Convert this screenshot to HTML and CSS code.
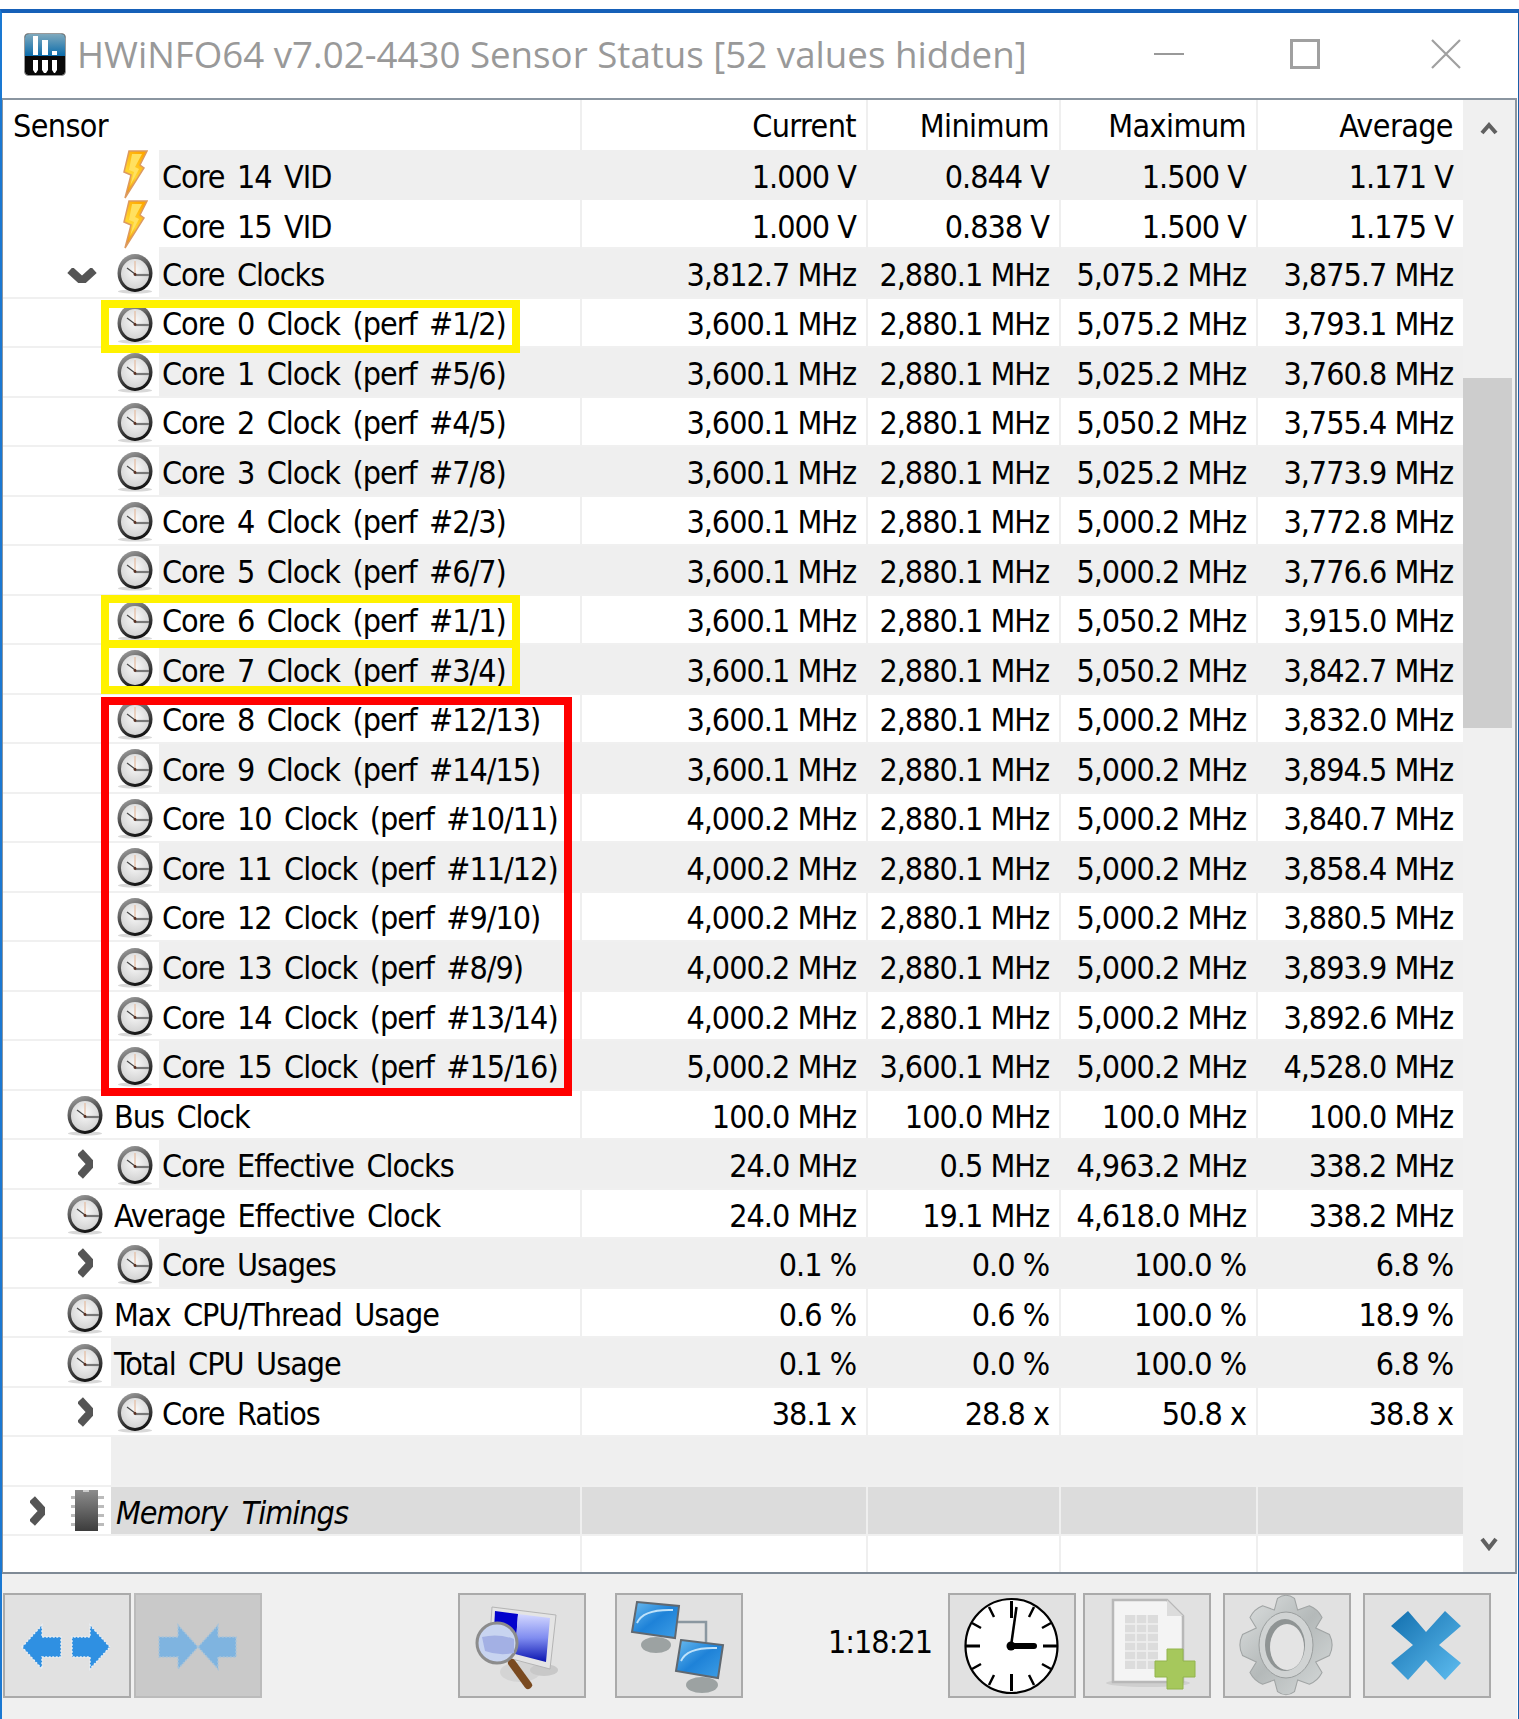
FILE: index.html
```html
<!DOCTYPE html>
<html lang="en">
<head>
<meta charset="utf-8">
<title>HWiNFO64 Sensor Status</title>
<link rel="stylesheet" href="styles.css">
</head>
<body>
<svg class="defs" aria-hidden="true">
  <defs>
    <linearGradient id="ring" x1="0.2" y1="0" x2="0.6" y2="1"><stop offset="0" stop-color="#a0a0a0"/><stop offset="0.5" stop-color="#4c4c4c"/><stop offset="1" stop-color="#101010"/></linearGradient>
    <radialGradient id="face" cx="0.5" cy="0.4" r="0.7"><stop offset="0" stop-color="#fafafa"/><stop offset="1" stop-color="#cccccc"/></radialGradient>
    <linearGradient id="boltg" x1="0.7" y1="0" x2="0.3" y2="1"><stop offset="0" stop-color="#ffa800"/><stop offset="0.55" stop-color="#ffd530"/><stop offset="1" stop-color="#f59000"/></linearGradient>
    <linearGradient id="chipg" x1="0" y1="0" x2="0" y2="1"><stop offset="0" stop-color="#8c8c8c"/><stop offset="1" stop-color="#3c3c3c"/></linearGradient>
    <linearGradient id="logog" x1="0" y1="0" x2="0" y2="1"><stop offset="0" stop-color="#7fa9bd"/><stop offset="1" stop-color="#0a6cab"/></linearGradient>
    <linearGradient id="panel" x1="0" y1="0" x2="0" y2="1"><stop offset="0" stop-color="#d4d8ff"/><stop offset="0.5" stop-color="#7f8cf0"/><stop offset="1" stop-color="#0a14b0"/></linearGradient>
    <linearGradient id="scrn2" x1="0" y1="0" x2="1" y2="1"><stop offset="0" stop-color="#6cbcf0"/><stop offset="0.5" stop-color="#1e82d8"/><stop offset="1" stop-color="#3f9fe6"/></linearGradient>
    <linearGradient id="silver" x1="0" y1="0" x2="1" y2="1"><stop offset="0" stop-color="#dfe2e2"/><stop offset="0.5" stop-color="#b4b9b9"/><stop offset="1" stop-color="#d8dcdc"/></linearGradient>
    <linearGradient id="xg" x1="0" y1="0" x2="1" y2="1"><stop offset="0" stop-color="#126fae"/><stop offset="1" stop-color="#5fbdf0"/></linearGradient>
    <filter id="soft"><feGaussianBlur stdDeviation="0.7"/></filter>
    <symbol id="clock" viewBox="0 0 36 40">
      <ellipse cx="18" cy="37.5" rx="17" ry="2" fill="#d8d8d8"/>
      <ellipse cx="18" cy="19" rx="17.5" ry="19" fill="url(#ring)"/>
      <ellipse cx="18" cy="20" rx="14" ry="15" fill="url(#face)"/>
      <path d="M18 20V7" stroke="#e6c4ae" stroke-width="1.5"/>
      <path d="M18 20L10 14" stroke="#444" stroke-width="1.2"/>
      <path d="M18 21H32" stroke="#777" stroke-width="2.2"/>
      <circle cx="18" cy="20.5" r="1.4" fill="#5a3020"/>
    </symbol>
    <symbol id="bolt" viewBox="0 0 26 50">
      <path d="M7 1H25L18 15L22 18L3 48L9 25L2 22Z" fill="url(#boltg)" stroke="#dc9a60" stroke-width="1.5"/>
      <path d="M10 4H20L13 17L17 19L8 36L12 22L7 20Z" fill="#ffe060"/>
    </symbol>
    <symbol id="chev-r" viewBox="0 0 19 30">
      <path d="M4 3L15 15L4 27" fill="none" stroke="#555" stroke-width="8" filter="url(#soft)"/>
    </symbol>
    <symbol id="chev-d" viewBox="0 0 30 20">
      <path d="M3 4L15 15L27 4" fill="none" stroke="#555" stroke-width="8" filter="url(#soft)"/>
    </symbol>
  </defs>
</svg>
<main class="window">
  <header class="titlebar">
    <svg class="logo" viewBox="0 0 42 43"><rect x="0.5" y="0.5" width="41" height="42" rx="4" fill="#0a0a0a" stroke="#999"/><path d="M1 5a4 4 0 0 1 4-4h32a4 4 0 0 1 4 4V23H1Z" fill="url(#logog)"/><g fill="#fff"><rect x="9" y="3" width="5" height="19"/><rect x="18" y="7" width="6" height="15"/><rect x="28" y="18" width="5" height="4"/><path d="M9 27h5v10l-2 3h-1l-2-3Z"/><path d="M18 27h6v10l-2 3h-2l-2-3Z"/><path d="M28 27h5v10l-2 3h-1l-2-3Z"/></g></svg>
    <h1 class="title">HWiNFO64 v7.02-4430 Sensor Status [52 values hidden]</h1>
    <span class="winbtn winbtn-min"></span>
    <span class="winbtn winbtn-max"></span>
    <svg class="winbtn-close" viewBox="0 0 30 30"><path d="M1 1L29 29M29 1L1 29" stroke="#a0a0a0" stroke-width="2.2"/></svg>
  </header>
  <section class="frame">
    <div class="list">
      <div class="row head"><div class="name">Sensor</div><div class="val">Current</div><div class="val">Minimum</div><div class="val">Maximum</div><div class="val">Average</div></div>

      <div class="row alt"><div class="name"><span class="gutter l2"><svg class="ic-bolt"><use href="#bolt"/></svg></span><span class="label">Core 14 VID</span></div><div class="val">1.000 V</div><div class="val">0.844 V</div><div class="val">1.500 V</div><div class="val">1.171 V</div></div>
      <div class="row"><div class="name"><span class="gutter l2"><svg class="ic-bolt"><use href="#bolt"/></svg></span><span class="label">Core 15 VID</span></div><div class="val">1.000 V</div><div class="val">0.838 V</div><div class="val">1.500 V</div><div class="val">1.175 V</div></div>
      <div class="row alt"><div class="name"><span class="gutter l2"><svg class="ic-chev-d"><use href="#chev-d"/></svg><svg class="ic-clock"><use href="#clock"/></svg></span><span class="label">Core Clocks</span></div><div class="val">3,812.7 MHz</div><div class="val">2,880.1 MHz</div><div class="val">5,075.2 MHz</div><div class="val">3,875.7 MHz</div></div>
      <div class="row"><div class="name"><span class="gutter l2"><svg class="ic-clock"><use href="#clock"/></svg></span><span class="label">Core 0 Clock (perf #1/2)</span></div><div class="val">3,600.1 MHz</div><div class="val">2,880.1 MHz</div><div class="val">5,075.2 MHz</div><div class="val">3,793.1 MHz</div></div>
      <div class="row alt"><div class="name"><span class="gutter l2"><svg class="ic-clock"><use href="#clock"/></svg></span><span class="label">Core 1 Clock (perf #5/6)</span></div><div class="val">3,600.1 MHz</div><div class="val">2,880.1 MHz</div><div class="val">5,025.2 MHz</div><div class="val">3,760.8 MHz</div></div>
      <div class="row"><div class="name"><span class="gutter l2"><svg class="ic-clock"><use href="#clock"/></svg></span><span class="label">Core 2 Clock (perf #4/5)</span></div><div class="val">3,600.1 MHz</div><div class="val">2,880.1 MHz</div><div class="val">5,050.2 MHz</div><div class="val">3,755.4 MHz</div></div>
      <div class="row alt"><div class="name"><span class="gutter l2"><svg class="ic-clock"><use href="#clock"/></svg></span><span class="label">Core 3 Clock (perf #7/8)</span></div><div class="val">3,600.1 MHz</div><div class="val">2,880.1 MHz</div><div class="val">5,025.2 MHz</div><div class="val">3,773.9 MHz</div></div>
      <div class="row"><div class="name"><span class="gutter l2"><svg class="ic-clock"><use href="#clock"/></svg></span><span class="label">Core 4 Clock (perf #2/3)</span></div><div class="val">3,600.1 MHz</div><div class="val">2,880.1 MHz</div><div class="val">5,000.2 MHz</div><div class="val">3,772.8 MHz</div></div>
      <div class="row alt"><div class="name"><span class="gutter l2"><svg class="ic-clock"><use href="#clock"/></svg></span><span class="label">Core 5 Clock (perf #6/7)</span></div><div class="val">3,600.1 MHz</div><div class="val">2,880.1 MHz</div><div class="val">5,000.2 MHz</div><div class="val">3,776.6 MHz</div></div>
      <div class="row"><div class="name"><span class="gutter l2"><svg class="ic-clock"><use href="#clock"/></svg></span><span class="label">Core 6 Clock (perf #1/1)</span></div><div class="val">3,600.1 MHz</div><div class="val">2,880.1 MHz</div><div class="val">5,050.2 MHz</div><div class="val">3,915.0 MHz</div></div>
      <div class="row alt"><div class="name"><span class="gutter l2"><svg class="ic-clock"><use href="#clock"/></svg></span><span class="label">Core 7 Clock (perf #3/4)</span></div><div class="val">3,600.1 MHz</div><div class="val">2,880.1 MHz</div><div class="val">5,050.2 MHz</div><div class="val">3,842.7 MHz</div></div>
      <div class="row"><div class="name"><span class="gutter l2"><svg class="ic-clock"><use href="#clock"/></svg></span><span class="label">Core 8 Clock (perf #12/13)</span></div><div class="val">3,600.1 MHz</div><div class="val">2,880.1 MHz</div><div class="val">5,000.2 MHz</div><div class="val">3,832.0 MHz</div></div>
      <div class="row alt"><div class="name"><span class="gutter l2"><svg class="ic-clock"><use href="#clock"/></svg></span><span class="label">Core 9 Clock (perf #14/15)</span></div><div class="val">3,600.1 MHz</div><div class="val">2,880.1 MHz</div><div class="val">5,000.2 MHz</div><div class="val">3,894.5 MHz</div></div>
      <div class="row"><div class="name"><span class="gutter l2"><svg class="ic-clock"><use href="#clock"/></svg></span><span class="label">Core 10 Clock (perf #10/11)</span></div><div class="val">4,000.2 MHz</div><div class="val">2,880.1 MHz</div><div class="val">5,000.2 MHz</div><div class="val">3,840.7 MHz</div></div>
      <div class="row alt"><div class="name"><span class="gutter l2"><svg class="ic-clock"><use href="#clock"/></svg></span><span class="label">Core 11 Clock (perf #11/12)</span></div><div class="val">4,000.2 MHz</div><div class="val">2,880.1 MHz</div><div class="val">5,000.2 MHz</div><div class="val">3,858.4 MHz</div></div>
      <div class="row"><div class="name"><span class="gutter l2"><svg class="ic-clock"><use href="#clock"/></svg></span><span class="label">Core 12 Clock (perf #9/10)</span></div><div class="val">4,000.2 MHz</div><div class="val">2,880.1 MHz</div><div class="val">5,000.2 MHz</div><div class="val">3,880.5 MHz</div></div>
      <div class="row alt"><div class="name"><span class="gutter l2"><svg class="ic-clock"><use href="#clock"/></svg></span><span class="label">Core 13 Clock (perf #8/9)</span></div><div class="val">4,000.2 MHz</div><div class="val">2,880.1 MHz</div><div class="val">5,000.2 MHz</div><div class="val">3,893.9 MHz</div></div>
      <div class="row"><div class="name"><span class="gutter l2"><svg class="ic-clock"><use href="#clock"/></svg></span><span class="label">Core 14 Clock (perf #13/14)</span></div><div class="val">4,000.2 MHz</div><div class="val">2,880.1 MHz</div><div class="val">5,000.2 MHz</div><div class="val">3,892.6 MHz</div></div>
      <div class="row alt"><div class="name"><span class="gutter l2"><svg class="ic-clock"><use href="#clock"/></svg></span><span class="label">Core 15 Clock (perf #15/16)</span></div><div class="val">5,000.2 MHz</div><div class="val">3,600.1 MHz</div><div class="val">5,000.2 MHz</div><div class="val">4,528.0 MHz</div></div>
      <div class="row"><div class="name"><span class="gutter l1"><svg class="ic-clock1"><use href="#clock"/></svg></span><span class="label">Bus Clock</span></div><div class="val">100.0 MHz</div><div class="val">100.0 MHz</div><div class="val">100.0 MHz</div><div class="val">100.0 MHz</div></div>
      <div class="row alt"><div class="name"><span class="gutter l2"><svg class="ic-chev-r"><use href="#chev-r"/></svg><svg class="ic-clock"><use href="#clock"/></svg></span><span class="label">Core Effective Clocks</span></div><div class="val">24.0 MHz</div><div class="val">0.5 MHz</div><div class="val">4,963.2 MHz</div><div class="val">338.2 MHz</div></div>
      <div class="row"><div class="name"><span class="gutter l1"><svg class="ic-clock1"><use href="#clock"/></svg></span><span class="label">Average Effective Clock</span></div><div class="val">24.0 MHz</div><div class="val">19.1 MHz</div><div class="val">4,618.0 MHz</div><div class="val">338.2 MHz</div></div>
      <div class="row alt"><div class="name"><span class="gutter l2"><svg class="ic-chev-r"><use href="#chev-r"/></svg><svg class="ic-clock"><use href="#clock"/></svg></span><span class="label">Core Usages</span></div><div class="val">0.1 %</div><div class="val">0.0 %</div><div class="val">100.0 %</div><div class="val">6.8 %</div></div>
      <div class="row"><div class="name"><span class="gutter l1"><svg class="ic-clock1"><use href="#clock"/></svg></span><span class="label">Max CPU/Thread Usage</span></div><div class="val">0.6 %</div><div class="val">0.6 %</div><div class="val">100.0 %</div><div class="val">18.9 %</div></div>
      <div class="row alt"><div class="name"><span class="gutter l1"><svg class="ic-clock1"><use href="#clock"/></svg></span><span class="label">Total CPU Usage</span></div><div class="val">0.1 %</div><div class="val">0.0 %</div><div class="val">100.0 %</div><div class="val">6.8 %</div></div>
      <div class="row"><div class="name"><span class="gutter l2"><svg class="ic-chev-r"><use href="#chev-r"/></svg><svg class="ic-clock"><use href="#clock"/></svg></span><span class="label">Core Ratios</span></div><div class="val">38.1 x</div><div class="val">28.8 x</div><div class="val">50.8 x</div><div class="val">38.8 x</div></div>
      <div class="row alt"><div class="name"><span class="gutter l1"></span><span class="label"></span></div><div class="val"></div><div class="val"></div><div class="val"></div><div class="val"></div></div>
      <div class="row group"><div class="name"><span class="gutter l1"><svg class="ic-chev-r ic-chev-mem"><use href="#chev-r"/></svg><svg class="ic-chip" viewBox="0 0 33 41"><g fill="#bbb"><rect x="0" y="6" width="4" height="3"/><rect x="0" y="15" width="4" height="3"/><rect x="0" y="24" width="4" height="3"/><rect x="0" y="33" width="4" height="3"/><rect x="27" y="6" width="6" height="3"/><rect x="27" y="15" width="6" height="3"/><rect x="27" y="24" width="6" height="3"/><rect x="27" y="33" width="6" height="3"/></g><rect x="4" y="0" width="23" height="41" fill="url(#chipg)"/><rect x="12" y="0" width="6" height="2" fill="#ccc"/></svg></span><span class="label">Memory Timings</span></div><div class="val"></div><div class="val"></div><div class="val"></div><div class="val"></div></div>
      <div class="row"><div class="name"><span class="gutter l1"></span><span class="label"></span></div><div class="val"></div><div class="val"></div><div class="val"></div><div class="val"></div></div>

      <div class="mark yellow mark-a"></div>
      <div class="mark yellow mark-b"></div>
      <div class="mark yellow mark-c"></div>
      <div class="mark red mark-d"></div>
    </div>
    <aside class="scrollbar">
      <svg class="arrow" viewBox="0 0 18 14"><path d="M2 12L9 4L16 12" fill="none" stroke="#606060" stroke-width="4"/></svg>
      <div class="track"><div class="thumb"></div></div>
      <svg class="arrow" viewBox="0 0 18 14"><path d="M2 2L9 11L16 2" fill="none" stroke="#606060" stroke-width="4"/></svg>
    </aside>
  </section>
  <footer class="toolbar">
    <div class="btn btn-a">
      <svg viewBox="0 0 128 105"><g fill="#2f90e2" stroke="#e8eef4" stroke-width="1.5" stroke-dasharray="2 1.5"><path d="M19 54L39 32V44H58V64H39V76Z"/><path d="M107 54L87 32V44H69V64H87V76Z"/></g></svg>
    </div>
    <div class="btn btn-b">
      <svg viewBox="0 0 128 105"><g fill="#7fb4e0" stroke="#a8c4da" stroke-width="1.5" stroke-dasharray="2 1.5"><path d="M64 54L44 32V44H25V64H44V76Z"/><path d="M64 54L84 32V44H102V64H84V76Z"/></g></svg>
    </div>
    <div class="btn btn-c">
      <svg viewBox="0 0 128 105">
        <ellipse cx="62" cy="79" rx="20" ry="10" fill="#d4d4d4"/><ellipse cx="86" cy="77" rx="14" ry="6" fill="#c8c8c8" filter="url(#soft)"/>
        <path d="M34 14L98 22L92 76L31 60Z" fill="#e4e4e4" stroke="#b4b4b4"/>
        <path d="M37 18L60 21L57 61L35 56Z" fill="#0202cc"/>
        <path d="M60 21L92 25L88 69L57 61Z" fill="url(#panel)"/>
        <path d="M54 70L70 92" stroke="#7a4a20" stroke-width="8" stroke-linecap="round"/>
        <circle cx="39" cy="50" r="20" fill="#c8d4f0" stroke="#8c8c8c" stroke-width="3"/>
        <path d="M24 44Q40 40 56 46V60Q40 63 27 58Z" fill="#a3b0e4"/>
      </svg>
    </div>
    <div class="btn btn-d">
      <svg viewBox="0 0 128 105">
        <path d="M63 29H91V49" fill="none" stroke="#8a97a0" stroke-width="2.5"/>
        <ellipse cx="41" cy="52" rx="15" ry="8" fill="#9ca2a2"/>
        <path d="M22 9L64 13L60 45L17 39Z" fill="url(#scrn2)" stroke="#606870" stroke-width="2"/>
        <path d="M22 30Q28 16 58 17" fill="none" stroke="#bfe2fa" stroke-width="2"/>
        <ellipse cx="87" cy="92" rx="16" ry="8" fill="#9ca2a2"/>
        <path d="M66 47L108 52L103 85L61 78Z" fill="url(#scrn2)" stroke="#606870" stroke-width="2"/>
        <path d="M66 68Q72 54 102 55" fill="none" stroke="#bfe2fa" stroke-width="2"/>
      </svg>
    </div>
    <span class="time">1:18:21</span>
    <div class="btn btn-e">
      <svg viewBox="0 0 128 105">
        <ellipse cx="63.5" cy="53" rx="46" ry="47" fill="#fff" stroke="#000" stroke-width="2.2"/>
        <g stroke="#000" stroke-width="3">
          <path d="M63.5 8V25M63.5 81V98M18 53H32M95 53H109"/>
          <path d="M86 14L81 24M41 14L46 24M103 30L94 35M24 30L33 35M103 76L94 71M24 76L33 71M86 92L81 82M41 92L46 82" stroke-width="2.5"/>
        </g>
        <path d="M63 53L68.5 14" stroke="#000" stroke-width="2.5"/>
        <path d="M63 53H86" stroke="#000" stroke-width="6" stroke-linecap="round"/>
        <circle cx="63" cy="53" r="4.5"/>
      </svg>
    </div>
    <div class="btn btn-f">
      <svg viewBox="0 0 128 105">
        <ellipse cx="65" cy="90" rx="42" ry="4" fill="#cfcfcf" filter="url(#soft)"/>
        <path d="M30 7H84L100 23V89H30Z" fill="#f4f4f4" stroke="#b8b8b8" stroke-width="2.5"/>
        <path d="M84 7V23H100Z" fill="#dcdcdc"/>
        <g fill="#dcdcdc"><rect x="42" y="22" width="33" height="54"/></g>
        <g stroke="#efefef" stroke-width="1.5"><path d="M42 31H75M42 40H75M42 49H75M42 58H75M42 67H75M53 22V76M64 22V76"/></g>
        <path d="M84 56H100V68H112V84H100V96H84V84H72V68H84Z" fill="#a6c85c" stroke="#92b44c"/>
      </svg>
    </div>
    <div class="btn btn-g">
      <svg viewBox="0 0 128 105">
        <g fill="url(#silver)" stroke="#a0a4a4" transform="translate(63 52) scale(1.06) translate(-63 -52)">
          <path d="M55 8Q63 2 71 8L74 19L85 15Q93 18 97 26L91 36L104 42Q109 52 104 62L91 68L97 78Q93 86 85 89L74 85L71 96Q63 102 55 96L52 85L41 89Q33 86 29 78L35 68L22 62Q17 52 22 42L35 36L29 26Q33 18 41 15L52 19Z"/>
        </g>
        <ellipse cx="63" cy="52" rx="27" ry="33" fill="#d0d3d3" stroke="#9a9e9e"/>
        <ellipse cx="62" cy="52" rx="20" ry="26" fill="#8f9494"/>
        <ellipse cx="64" cy="54" rx="17" ry="23" fill="#e4e4e4"/>
      </svg>
    </div>
    <div class="btn btn-h">
      <svg viewBox="0 0 128 105"><path d="M45 18L63 39L82 18L98 33L76 52L98 70L82 87L63 67L45 87L28 70L50 52L28 33Z" fill="url(#xg)"/></svg>
    </div>
  </footer>
</main>
</body>
</html>
```
FILE: styles.css
```css
* { box-sizing: border-box; }
html, body { margin: 0; padding: 0; background: #fff; }
body { padding-top: 9px; height: 1719px; overflow: hidden; font-family: "DejaVu Sans Condensed", "DejaVu Sans", sans-serif; font-stretch: condensed; }
.defs { position: absolute; width: 0; height: 0; }

.window { height: 1710px; display: flex; flex-direction: column; border-top: 4px solid #1660b8; border-left: 2px solid #1a78d2; border-right: 1px solid #1a60a8; padding-right: 1px; }

.titlebar { height: 85px; flex: none; display: flex; align-items: center; padding: 0 0 3px 22px; color: #999; }
.logo { width: 42px; height: 43px; flex: none; }
.title { margin: 0 0 0 11px; font-family: "Open Sans", sans-serif; font-stretch: normal; font-weight: 400; font-size: 36.7px; color: #999; white-space: nowrap; width: 1077px; flex: none; }
.winbtn { display: block; flex: none; }
.winbtn-min { width: 30px; height: 2px; background: #999; }
.winbtn-max { width: 30px; height: 30px; border: 3px solid #a0a0a0; margin-left: 106px; }
.winbtn-close { width: 30px; height: 30px; margin-left: 111px; flex: none; }

.frame { height: 1476px; flex: none; display: flex; border-top: 2px solid #8a95a0; border-bottom: 2px solid #7f8a96; border-left: 1px solid #8a95a0; border-right: 2px solid #8a95a0; }
.list { position: relative; width: 1460px; flex: none; overflow: hidden; background: #fff; }

.row { display: grid; grid-template-columns: 577px 286px 193px 197px 207px; height: 49.52px; border-bottom: 2px solid #f0f0f0; font-size: 32px; letter-spacing: -1px; color: #000; }
.row.head { height: 50px; border-bottom: 0; letter-spacing: -0.6px; }
.head .name { padding: 2px 0 0 10px; }
.head .val { padding-top: 2px; }
.name { display: flex; align-items: center; min-width: 0; white-space: nowrap; }
.gutter { height: 100%; flex: none; display: flex; align-items: center; justify-content: flex-end; background: #fff; }
.gutter.l2 { width: 156px; }
.gutter.l1 { width: 108px; }
.label { flex: 1; height: 100%; display: flex; align-items: center; padding: 4px 0 0 3px; word-spacing: 4.3px; white-space: pre; }
.val { display: flex; align-items: center; justify-content: flex-end; padding: 4px 10px 0 0; border-left: 2px solid #efefef; white-space: nowrap; }
.row.alt .label, .row.alt .val { background: #efefef; }
.row.group .label, .row.group .val { background: #dcdcdc; }
.row.group .label { font-style: italic; padding-left: 5px; word-spacing: 6.5px; }

.ic-bolt { width: 26px; height: 50px; margin-right: 11px; flex: none; }
.ic-clock { width: 36px; height: 40px; margin: 3px 6px 0 0; flex: none; }
.ic-clock1 { width: 36px; height: 40px; margin: 3px 8px 0 0; flex: none; }
.ic-chev-r { width: 19px; height: 30px; margin-right: 22px; flex: none; }
.ic-chev-d { width: 30px; height: 20px; margin-right: 20px; margin-top: 6px; flex: none; }
.ic-chev-mem { margin-right: 24px; }
.ic-chip { width: 33px; height: 41px; margin-right: 7px; flex: none; }

.mark { position: absolute; border-style: solid; border-width: 8px; pointer-events: none; }
.yellow { border-color: #fff200; left: 98px; width: 419px; }
.red { border-color: #ff0000; left: 98px; width: 471px; }
.mark-a { top: 200px; height: 53px; }
.mark-b { top: 495px; height: 53px; }
.mark-c { top: 540px; height: 54px; }
.mark-d { top: 597px; height: 399px; }

.scrollbar { flex: 1; background: #f0f0f0; display: flex; flex-direction: column; align-items: center; }
.arrow { width: 18px; height: 14px; margin: 21px 0; flex: none; }
.track { flex: 1; width: 100%; padding-right: 3px; }
.thumb { height: 350px; margin-top: 222px; background: #cdcdcd; }

.toolbar { flex: 1; background: #f0f0f0; display: flex; align-items: flex-start; padding: 19px 0 0 1px; }
.btn { width: 128px; height: 105px; flex: none; background: #e1e1e1; box-shadow: inset 0 0 0 2px #aaa; }
.btn svg { display: block; width: 100%; height: 100%; }
.btn-b { margin-left: 3px; background: #c9c9c9; box-shadow: inset 0 0 0 2px #bbb; }
.btn-c { margin-left: 196px; }
.btn-d { margin-left: 29px; }
.time { width: 205px; flex: none; height: 105px; display: flex; align-items: center; justify-content: flex-end; padding: 0 16px 8px 0; font-size: 32px; letter-spacing: -1px; color: #000; }
.btn-f { margin-left: 7px; }
.btn-g, .btn-h { margin-left: 12px; }
```
